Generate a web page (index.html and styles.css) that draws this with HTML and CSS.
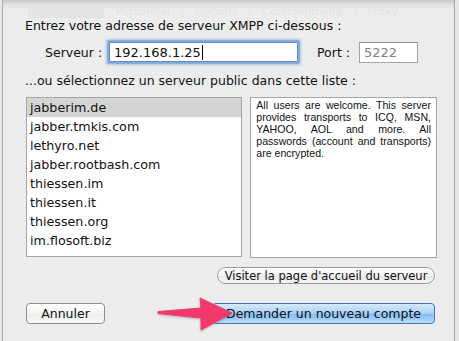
FILE: index.html
```html
<!DOCTYPE html>
<html lang="fr">
<head>
    <meta charset="UTF-8">
    <title>Nouveau compte</title>
    <link rel="stylesheet" href="styles.css">
</head>
<body>
<div class="sheet">
    <div class="ghost-tabs">
        <span class="ghost-tab active"></span>
        <span class="ghost-tab">Personnel</span>
        <span class="ghost-tab">Options</span>
        <span class="ghost-tab">Confidentialité</span>
        <span class="ghost-tab">Proxy</span>
    </div>

    <div class="content">
        <p class="intro">Entrez votre adresse de serveur XMPP ci-dessous :</p>

        <div class="server-row">
            <label class="label-server">Serveur :</label>
            <div class="input input-server">192.168.1.25<span class="caret"></span></div>
            <label class="label-port">Port :</label>
            <div class="input input-port">5222</div>
        </div>

        <p class="intro intro-list">...ou sélectionnez un serveur public dans cette liste :</p>

        <div class="boxes">
            <ul class="server-list">
                <li class="selected">jabberim.de</li>
                <li>jabber.tmkis.com</li>
                <li>lethyro.net</li>
                <li>jabber.rootbash.com</li>
                <li>thiessen.im</li>
                <li>thiessen.it</li>
                <li>thiessen.org</li>
                <li>im.flosoft.biz</li>
            </ul>
            <div class="description">
                <span class="line">All users are welcome. This server</span>
                <span class="line">provides transports to ICQ, MSN,</span>
                <span class="line">YAHOO, AOL and more. All</span>
                <span class="line">passwords (account and transports)</span>
                <span class="line last">are encrypted.</span>
            </div>
        </div>

        <div class="visit-row">
            <button class="btn-round">Visiter la page d'accueil du serveur</button>
        </div>

        <div class="bottom-row">
            <button class="btn btn-cancel">Annuler</button>
            <button class="btn btn-default">Demander un nouveau compte</button>
        </div>
    </div>

    <svg class="arrow" width="90" height="44" viewBox="0 0 90 44">
        <path d="M5 20.5 L48 17 L47 7 L79 22 L48 39 L48 27 L5 22.5 Z" fill="#f2386c" stroke="#f2386c" stroke-width="1" stroke-linejoin="round"/>
    </svg>
</div>
</body>
</html>
```

FILE: styles.css
```css
body, html {
    margin: 0;
    padding: 0;
    background: #e6e6e6;
    font-family: "DejaVu Sans", "Noto Sans", sans-serif;
    color: #111;
}

.sheet {
    position: relative;
    width: 451px;
    height: 341px;
    margin-left: 2px;
    border-left: 1px solid #a9a9a9;
    border-right: 1px solid #a9a9a9;
    background: linear-gradient(#c9c9c9 0, #e3e3e3 5px, #ececec 10px, #ececec 100%);
    overflow: hidden;
}

/* window tabs seen through the sheet */
.ghost-tabs {
    display: flex;
    height: 18px;
    padding: 5px 0 0 25px;
    box-sizing: border-box;
    overflow: hidden;
    font-size: 11px;
    line-height: 13px;
    color: #e1e1e1;
}

.ghost-tab {
    padding: 0 12px;
    border-left: 1px solid #e6e6e6;
}

.ghost-tab.active {
    width: 50px;
    background: #e4e4e4;
    border-radius: 3px 0 0 0;
}

.content {
    padding: 0 17px 0 19px;
}

.intro {
    margin: 0;
    font-size: 12.5px;
    line-height: 16px;
    padding-left: 3px;
}

.server-row {
    display: flex;
    align-items: center;
    margin-top: 6px;
    font-size: 12.5px;
}

.label-server {
    margin-left: 23px;
    width: 62px;
}

.input {
    box-sizing: border-box;
    background: #fff;
    font-size: 13px;
    display: flex;
    align-items: center;
}

.input-server {
    width: 189px;
    height: 20px;
    margin: 2px;
    padding-left: 4px;
    border: 1px solid #5d8bc6;
    box-shadow: 0 0 0 2px #86ade0, 0 0 2px 3px rgba(120, 160, 215, 0.5);
    border-radius: 1px;
}

.caret {
    width: 1px;
    height: 15px;
    background: #000;
    margin-left: 1px;
}

.label-port {
    margin-left: 17px;
    width: 42px;
}

.input-port {
    width: 59px;
    height: 21px;
    padding-left: 4px;
    border: 1px solid #a3a3a3;
    border-top-color: #8c8c8c;
    color: #808080;
}

.intro-list {
    margin-top: 9px;
}

.boxes {
    display: flex;
    gap: 8px;
    margin-top: 8px;
    padding-left: 4px;
}

.server-list {
    list-style: none;
    margin: 0;
    padding: 0;
    width: 217px;
    height: 158px;
    border: 1px solid #a5a5a5;
    background: #fff;
    overflow: hidden;
    font-size: 12.7px;
}

.server-list li {
    height: 19px;
    line-height: 19px;
    padding-left: 3px;
}

.server-list li.selected {
    background: #d4d4d4;
}

.description {
    width: 177px;
    height: 158px;
    box-sizing: content-box;
    padding: 1px 5px 0 5px;
    border: 1px solid #a5a5a5;
    background: #fff;
    font-family: "Liberation Sans", Arial, sans-serif;
    font-size: 10.6px;
    line-height: 12px;
}

.description .line {
    display: block;
    white-space: nowrap;
    text-align: justify;
    text-align-last: justify;
}

.description .line.last {
    text-align-last: left;
}

.visit-row {
    display: flex;
    justify-content: flex-end;
    margin-top: 9px;
    padding-right: 2px;
}

.btn-round {
    height: 17px;
    width: 218px;
    padding: 0;
    font-family: inherit;
    font-size: 11.5px;
    color: #111;
    border: 1px solid #9b9b9b;
    border-radius: 9px;
    background: linear-gradient(#ffffff, #f2f2f2 50%, #e6e6e6 51%, #f6f6f6);
}

.bottom-row {
    display: flex;
    justify-content: space-between;
    margin-top: 19px;
    padding: 0 2px 0 4px;
}

.btn {
    height: 21px;
    padding: 0;
    font-family: inherit;
    font-size: 12.5px;
    color: #111;
    border-radius: 4px;
}

.btn-cancel {
    width: 79px;
    border: 1px solid #8e8e8e;
    background: linear-gradient(#ffffff, #f4f4f4 50%, #ebebeb 51%, #fafafa);
}

.btn-default {
    width: 223px;
    border: 1px solid #4a74ad;
    background: linear-gradient(#d6e9fc, #a9d0f7 50%, #80bbf4 51%, #b8dcfb);
}

.arrow {
    position: absolute;
    left: 150px;
    top: 291px;
    filter: drop-shadow(0 1px 1px rgba(0, 0, 0, 0.25));
}
```
